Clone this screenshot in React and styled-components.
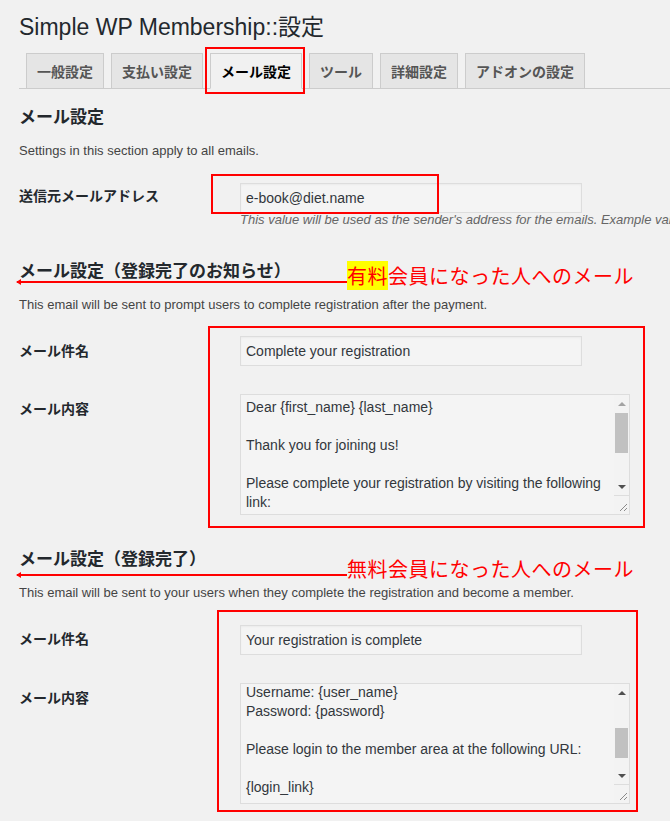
import React from 'react';
import styled, { createGlobalStyle } from 'styled-components';

const GlobalStyle = createGlobalStyle`
  html {
    overflow: hidden;
  }
  body {
    margin: 0;
    padding: 0;
    background: #f1f1f1;
    font-family: "Liberation Sans", "Noto Sans CJK JP", sans-serif;
    color: #23282d;
  }
`;

const Page = styled.div`
  padding: 12px 0 20px 19px;
  width: 651px;
`;

const Title = styled.h1`
  margin: 0;
  font-size: 23px;
  line-height: 30px;
  font-weight: 400;
  color: #23282d;
`;

const TabBar = styled.nav`
  margin-top: 11px;
  display: flex;
  align-items: flex-end;
  padding-left: 7px;
  border-bottom: 1px solid #ccc;
  height: 35px;
`;

const Tab = styled.div`
  position: relative;
  box-sizing: border-box;
  height: ${(p) => (p.$active ? '36px' : '35px')};
  margin-bottom: ${(p) => (p.$active ? '-1px' : '0')};
  margin-left: 7px;
  &:first-child {
    margin-left: 0;
  }
  padding: 0 10px;
  display: flex;
  align-items: center;
  padding-bottom: ${(p) => (p.$active ? '1px' : '0')};
  border: 1px solid #ccc;
  border-bottom: ${(p) => (p.$active ? '1px solid #f1f1f1' : 'none')};
  background: ${(p) => (p.$active ? '#f1f1f1' : '#e5e5e5')};
  color: ${(p) => (p.$active ? '#000' : '#555')};
  font-family: "Noto Sans CJK JP", sans-serif;
  font-size: 14px;
  font-weight: 700;
  white-space: nowrap;
`;

const Mark = styled.div`
  position: absolute;
  left: ${(p) => p.$l}px;
  top: ${(p) => p.$t}px;
  width: ${(p) => p.$w}px;
  height: ${(p) => p.$h}px;
  box-sizing: border-box;
  border: 2px solid #ff0000;
  pointer-events: none;
  z-index: 2;
`;

const Section = styled.section`
  margin-top: ${(p) => p.$top}px;
`;

const HeadWrap = styled.div`
  position: relative;
`;

const SectionTitle = styled.h2`
  margin: 0;
  font-family: "Noto Sans CJK JP", sans-serif;
  font-size: 17px;
  line-height: 24px;
  height: 24px;
  font-weight: 700;
  color: #23282d;
`;

const Note = styled.div`
  position: absolute;
  left: -2px;
  top: ${(p) => p.$t}px;
  display: flex;
  align-items: flex-start;
  height: 26px;
`;

const Arrow = styled.div`
  position: relative;
  flex: none;
  width: 330px;
  height: 2px;
  margin-top: 18px;
  background: #ff0000;
  &::before {
    content: '';
    position: absolute;
    left: -1px;
    top: -2px;
    border-right: 5px solid #ff0000;
    border-top: 3px solid transparent;
    border-bottom: 3px solid transparent;
  }
`;

const NoteText = styled.span`
  font-family: "Noto Sans CJK JP", sans-serif;
  font-size: 20px;
  line-height: 26px;
  letter-spacing: 0.5px;
  color: #ff0000;
  white-space: nowrap;
`;

const Marker = styled.span`
  background: #ffff00;
`;

const Desc = styled.p`
  margin: ${(p) => p.$top ?? 13}px 0 0;
  font-size: 13px;
  line-height: 20px;
  height: 20px;
  color: #444;
`;

const Group = styled.div`
  position: relative;
`;

const Row = styled.div`
  display: grid;
  grid-template-columns: 221px auto;
  align-items: start;
  margin-top: ${(p) => p.$top}px;
`;

const Label = styled.div`
  padding-top: ${(p) => p.$pad}px;
  font-family: "Noto Sans CJK JP", sans-serif;
  font-size: 14px;
  line-height: 20px;
  height: 20px;
  font-weight: 700;
  color: #23282d;
  white-space: nowrap;
`;

const Field = styled.div`
  position: relative;
  min-width: 0;
`;

const Input = styled.input`
  display: block;
  box-sizing: border-box;
  width: 342px;
  height: 30px;
  margin: 0;
  padding: 0 5px;
  border: 1px solid #ddd;
  background: #f4f4f4;
  box-shadow: inset 0 1px 2px rgba(0, 0, 0, 0.04);
  font-family: "Liberation Sans", "Noto Sans CJK JP", sans-serif;
  font-size: 14px;
  color: #32373c;
  outline: none;
`;

const Hint = styled.div`
  margin-top: -1px;
  font-size: 13px;
  line-height: 16px;
  height: 16px;
  font-style: italic;
  color: #666;
  white-space: nowrap;
`;

const TextArea = styled.div`
  box-sizing: border-box;
  width: 390px;
  height: 121px;
  border: 1px solid #ddd;
  background: #f4f4f4;
  display: grid;
  grid-template-columns: 1fr 15px;
  grid-template-rows: 119px;
  overflow: hidden;
`;

const TextBody = styled.div`
  overflow: hidden;
  min-height: 0;
`;

const TextInner = styled.div`
  margin-top: ${(p) => p.$scroll}px;
  padding: 3px 4px 0 5px;
  font-size: 14px;
  line-height: 19px;
  color: #32373c;
  white-space: pre-wrap;
`;

const ScrollBar = styled.div`
  display: flex;
  flex-direction: column;
  height: 119px;
  background: #f3f3f3;
`;

const ScrollBtn = styled.div`
  height: 17px;
  flex: none;
  display: flex;
  align-items: center;
  justify-content: center;
  &::after {
    content: '';
    border-left: 4px solid transparent;
    border-right: 4px solid transparent;
    ${(p) =>
      p.$down
        ? `border-top: 4px solid ${p.$dim ? '#a3a3a3' : '#505050'};`
        : `border-bottom: 4px solid ${p.$dim ? '#a3a3a3' : '#505050'};`}
  }
`;

const Track = styled.div`
  position: relative;
  flex: 1;
`;

const Thumb = styled.div`
  position: absolute;
  left: 1px;
  right: 1px;
  top: ${(p) => p.$top}px;
  height: ${(p) => p.$h}px;
  background: #c1c1c1;
`;

const Corner = styled.div`
  flex: none;
  box-sizing: border-box;
  height: 19px;
  border-top: 1px solid #ddd;
  display: flex;
  align-items: flex-end;
  justify-content: flex-end;
  padding: 0 1px 2px 0;
`;

const Grip = () => (
  <svg width="10" height="10" viewBox="0 0 10 10">
    <path d="M9 2 L2 9 M9 6 L6 9" stroke="#8a8a8a" strokeWidth="1" />
  </svg>
);

const tabs = ['一般設定', '支払い設定', 'メール設定', 'ツール', '詳細設定', 'アドオンの設定'];

const regBody = `Dear {first_name} {last_name}

Thank you for joining us!

Please complete your registration by visiting the following link:

{reg_link}

Thank You`;

const doneBody = `Username: {user_name}
Password: {password}

Please login to the member area at the following URL:

{login_link}

Thank You`;

const MailBox = ({ text, scroll, thumbTop, thumbH, atTop }) => (
  <TextArea>
    <TextBody>
      <TextInner $scroll={scroll}>{text}</TextInner>
    </TextBody>
    <ScrollBar>
      <ScrollBtn $dim={atTop} />
      <Track>
        <Thumb $top={thumbTop} $h={thumbH} />
      </Track>
      <ScrollBtn $down />
      <Corner>
        <Grip />
      </Corner>
    </ScrollBar>
  </TextArea>
);

export default function App() {
  return (
    <>
      <GlobalStyle />
      <Page>
        <Title>Simple WP Membership::設定</Title>
        <TabBar>
          {tabs.map((t) => (
            <Tab key={t} $active={t === 'メール設定'}>
              {t}
              {t === 'メール設定' && <Mark $l={-6} $t={-7} $w={100} $h={47} />}
            </Tab>
          ))}
        </TabBar>

        <Section $top={15}>
          <SectionTitle>メール設定</SectionTitle>
          <Desc>Settings in this section apply to all emails.</Desc>
          <Row $top={22}>
            <Label $pad={2}>送信元メールアドレス</Label>
            <Field>
              <Input readOnly defaultValue="e-book@diet.name" />
              <Mark $l={-29} $t={-9} $w={228} $h={40} />
              <Hint>
                This value will be used as the sender's address for the emails. Example value: Your Name &lt;sales@your-domain.com&gt;
              </Hint>
            </Field>
          </Row>
        </Section>

        <Section $top={30}>
          <HeadWrap>
            <SectionTitle>メール設定（登録完了のお知らせ）</SectionTitle>
            <Note $t={5}>
              <Arrow />
              <NoteText>
                <Marker>有料</Marker>会員になった人へのメール
              </NoteText>
            </Note>
          </HeadWrap>
          <Desc $top={13}>This email will be sent to prompt users to complete registration after the payment.</Desc>
          <Group>
            <Row $top={21}>
              <Label $pad={4}>メール件名</Label>
              <Field>
                <Input readOnly defaultValue="Complete your registration" />
              </Field>
            </Row>
            <Row $top={28}>
              <Label $pad={4}>メール内容</Label>
              <Field>
                <MailBox text={regBody} scroll={0} thumbTop={1} thumbH={40} atTop />
              </Field>
            </Row>
            <Mark $l={189} $t={-10} $w={437} $h={202} />
          </Group>
        </Section>

        <Section $top={31}>
          <HeadWrap>
            <SectionTitle>メール設定（登録完了）</SectionTitle>
            <Note $t={10}>
              <Arrow />
              <NoteText>無料会員になった人へのメール</NoteText>
            </Note>
          </HeadWrap>
          <Desc>This email will be sent to your users when they complete the registration and become a member.</Desc>
          <Group>
            <Row $top={22}>
              <Label $pad={3}>メール件名</Label>
              <Field>
                <Input readOnly defaultValue="Your registration is complete" />
              </Field>
            </Row>
            <Row $top={28}>
              <Label $pad={4}>メール内容</Label>
              <Field>
                <MailBox text={doneBody} scroll={-4} thumbTop={27} thumbH={30} />
              </Field>
            </Row>
            <Mark $l={198} $t={-15} $w={421} $h={202} />
          </Group>
        </Section>
      </Page>
    </>
  );
}
